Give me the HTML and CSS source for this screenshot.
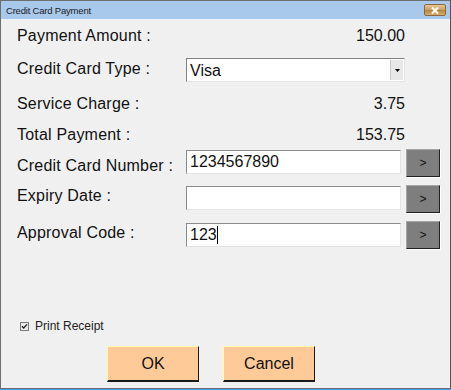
FILE: index.html
```html
<!DOCTYPE html>
<html lang="en">
<head>
<meta charset="UTF-8">
<meta name="viewport" content="width=device-width, initial-scale=1.0">
<title>Credit Card Payment</title>
<link rel="stylesheet" href="styles.css">
</head>
<body>
<div class="window">
    <div class="titlebar">
        <span class="title">Credit Card Payment</span>
        <span class="close-btn">
            <svg width="10" height="7" viewBox="0 0 10 7"><path d="M2 0.5 L8 6.5 M8 0.5 L2 6.5" stroke="#fff" stroke-width="2"/></svg>
        </span>
    </div>
    <div class="content">
        <div class="row row-amount">
            <span class="label">Payment Amount :</span>
            <span class="value">150.00</span>
        </div>
        <div class="row row-type">
            <span class="label">Credit Card Type :</span>
            <div class="select">
                <span class="select-text">Visa</span>
                <span class="select-arrow">
                    <svg width="5" height="3" viewBox="0 0 5 3"><path d="M0 0 H5 L2.5 3 Z" fill="#000"/></svg>
                </span>
            </div>
        </div>
        <div class="row row-service">
            <span class="label">Service Charge :</span>
            <span class="value">3.75</span>
        </div>
        <div class="row row-total">
            <span class="label">Total Payment :</span>
            <span class="value">153.75</span>
        </div>
        <div class="row row-input row-number">
            <span class="label">Credit Card Number :</span>
            <div class="textbox">1234567890</div>
            <button class="go-btn">&gt;</button>
        </div>
        <div class="row row-input row-expiry">
            <span class="label">Expiry Date :</span>
            <div class="textbox"></div>
            <button class="go-btn">&gt;</button>
        </div>
        <div class="row row-input row-approval">
            <span class="label">Approval Code :</span>
            <div class="textbox">123<span class="caret"></span></div>
            <button class="go-btn">&gt;</button>
        </div>

        <div class="receipt">
            <span class="checkbox">
                <svg width="9" height="9" viewBox="0 0 9 9"><rect x="0.5" y="0.5" width="8" height="8" fill="#ececec" stroke="#7a7a7a"/><path d="M2 4.2 L3.7 6 L7 2.4" stroke="#222" stroke-width="1.4" fill="none"/></svg>
            </span>
            <span>Print Receipt</span>
        </div>

        <div class="actions">
            <button class="action-btn">OK</button>
            <button class="action-btn">Cancel</button>
        </div>
    </div>
</div>
</body>
</html>
```

FILE: styles.css
```css
body {
    margin: 0;
    background-color: #3d9fe6;
    font-family: "Liberation Sans", Arial, sans-serif;
}

.window {
    width: 451px;
    height: 389px;
    box-sizing: border-box;
    border: 1px solid #6e6e6e;
    border-right-color: #555;
    background-color: #f0f0f0;
    display: flex;
    flex-direction: column;
}

.titlebar {
    height: 18px;
    background-color: #a9c9ec;
    display: flex;
    align-items: center;
    justify-content: space-between;
    padding: 0 4px 0 5px;
}

.title {
    font-size: 9.5px;
    color: #1b1b1b;
    letter-spacing: -0.2px;
    padding-top: 1px;
}

.close-btn {
    width: 20px;
    height: 10px;
    border: 1px solid #8a6a3c;
    border-radius: 2px;
    background: linear-gradient(#e6c992, #c99d5e 50%, #b8863f 55%, #d6ae70);
    display: flex;
    align-items: center;
    justify-content: center;
}

.content {
    padding: 0 0 0 16px;
    font-size: 16px;
    color: #111;
}

.row {
    display: grid;
    grid-template-columns: 164px 215px 34px;
    column-gap: 5px;
    line-height: 20px;
}

.label {
    white-space: nowrap;
    letter-spacing: 0.2px;
}

.value {
    width: 219px;
    text-align: right;
}

.row-amount { margin-top: 7px; }
.row-type { margin-top: 12px; }
.row-type .label { padding-top: 1px; }
.row-service { margin-top: 12px; }
.row-total { margin-top: 11px; }

.row-input {
    height: 28px;
}
.row-number { margin-top: 4px; }
.row-number .label { padding-top: 7px; }
.row-expiry { margin-top: 8px; }
.row-expiry .label { padding-top: 1px; }
.row-approval { margin-top: 8px; }
.row-approval .label { padding-top: 2px; }
.row-approval .textbox { margin-top: 2px; }

.select {
    width: 219px;
    height: 24px;
    box-sizing: border-box;
    background-color: #fff;
    border: 1px solid;
    border-color: #828282 #e3e3e3 #e3e3e3 #828282;
    display: flex;
    align-items: center;
    justify-content: space-between;
}

.select-text {
    padding-left: 3px;
    padding-top: 1px;
}

.select-arrow {
    width: 12px;
    height: 20px;
    margin-right: 1px;
    background-color: #e8e8e8;
    border-left: 1px solid #c8c8c8;
    display: flex;
    align-items: center;
    justify-content: center;
}

.textbox {
    height: 24px;
    margin-top: 1px;
    box-sizing: border-box;
    background-color: #fff;
    border: 1px solid;
    border-color: #8c8c8c #e3e3e3 #e3e3e3 #8c8c8c;
    padding: 1px 0 0 3px;
    line-height: 20px;
}

.caret {
    display: inline-block;
    width: 1px;
    height: 18px;
    background-color: #000;
    vertical-align: -4px;
}

.go-btn {
    width: 34px;
    height: 28px;
    box-sizing: border-box;
    margin: 0;
    padding: 0;
    background-color: #7e7e7e;
    border: 1px solid;
    border-color: #a6a6a6 #202020 #202020 #a6a6a6;
    box-shadow: 1px 1px 0 #fff;
    font-family: "Liberation Sans", Arial, sans-serif;
    font-size: 12px;
    color: #111;
}

.receipt {
    margin-top: 70px;
    margin-left: 3px;
    display: flex;
    align-items: center;
    font-size: 12px;
    line-height: 14px;
    color: #222;
}

.checkbox {
    display: flex;
    margin-right: 6px;
    margin-top: 1px;
}

.actions {
    margin-top: 13px;
    margin-left: 90px;
    display: flex;
    gap: 24px;
}

.action-btn {
    width: 92px;
    height: 36px;
    margin: 0;
    box-sizing: border-box;
    background-color: #fecb98;
    border: 1px solid;
    border-color: #fff9a8 #1a1a1a #1a1a1a #fff9a8;
    border-bottom-width: 2px;
    font-family: "Liberation Sans", Arial, sans-serif;
    font-size: 16px;
    color: #111;
}
```
